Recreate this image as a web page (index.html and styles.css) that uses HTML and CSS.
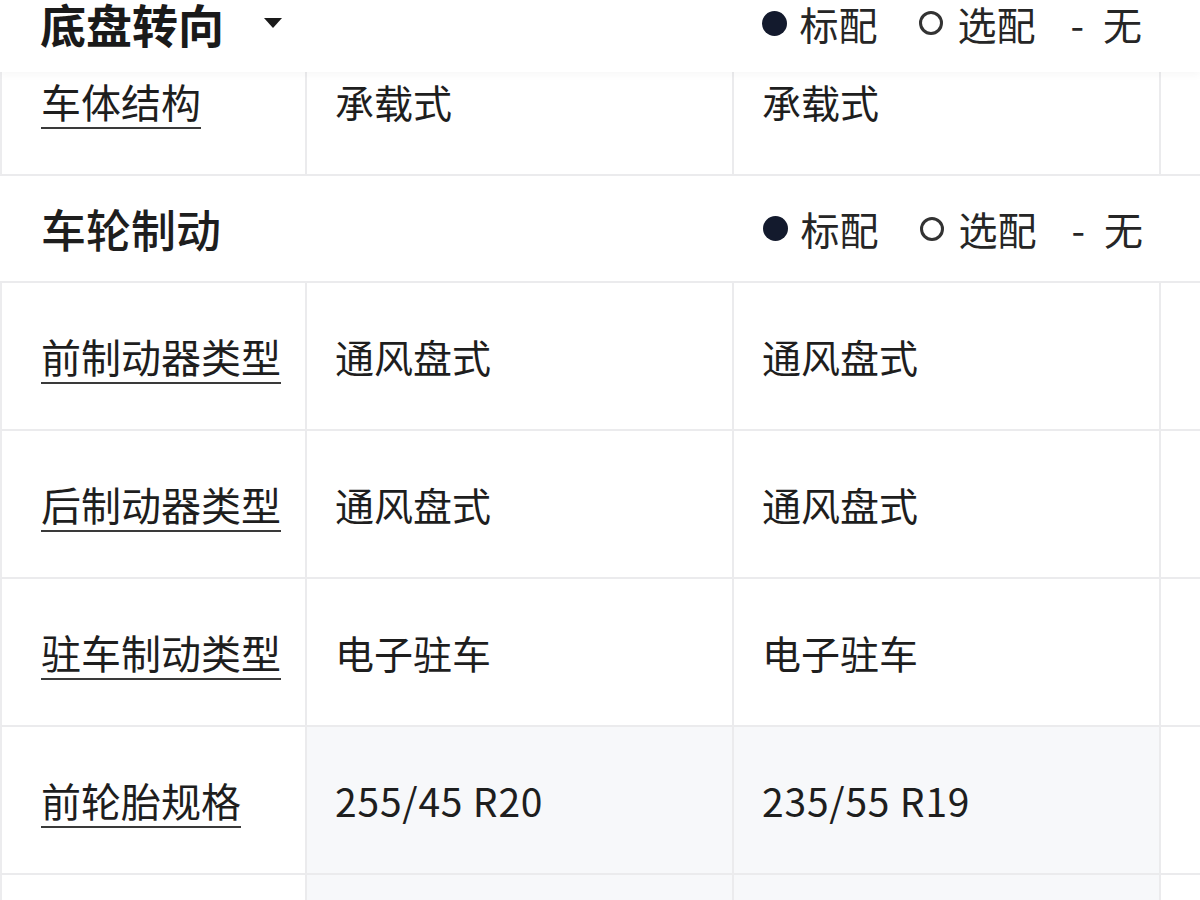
FILE: index.html
```html
<!DOCTYPE html>
<html lang="zh-CN">
<head>
<meta charset="utf-8">
<title>参数配置</title>
<link rel="stylesheet" href="styles.css">
</head>
<body>
<div class="page">
  <header class="sticky-head">
    <div class="head-title">底盘转向 <span class="caret"></span></div>
    <div class="legend">
      <span class="lg-item"><span class="dot"></span>标配</span>
      <span class="lg-item opt"><span class="ring"></span>选配</span>
      <span class="lg-item none"><span class="dash">-</span>无</span>
    </div>
  </header>

  <div class="spec">
    <div class="row">
      <div class="cell label"><span class="lbl">车体结构</span></div>
      <div class="cell val">承载式</div>
      <div class="cell val">承载式</div>
      <div class="cell val last"></div>
    </div>

    <div class="section">
      <div class="sec-title">车轮制动</div>
      <div class="legend">
        <span class="lg-item"><span class="dot"></span>标配</span>
        <span class="lg-item opt"><span class="ring"></span>选配</span>
        <span class="lg-item none"><span class="dash">-</span>无</span>
      </div>
    </div>

    <div class="row">
      <div class="cell label"><span class="lbl">前制动器类型</span></div>
      <div class="cell val">通风盘式</div>
      <div class="cell val">通风盘式</div>
      <div class="cell val last"></div>
    </div>
    <div class="row">
      <div class="cell label"><span class="lbl">后制动器类型</span></div>
      <div class="cell val">通风盘式</div>
      <div class="cell val">通风盘式</div>
      <div class="cell val last"></div>
    </div>
    <div class="row">
      <div class="cell label"><span class="lbl">驻车制动类型</span></div>
      <div class="cell val">电子驻车</div>
      <div class="cell val">电子驻车</div>
      <div class="cell val last"></div>
    </div>
    <div class="row diff">
      <div class="cell label"><span class="lbl">前轮胎规格</span></div>
      <div class="cell val num">255/45 R20</div>
      <div class="cell val num">235/55 R19</div>
      <div class="cell val last"></div>
    </div>
    <div class="row diff">
      <div class="cell label"></div>
      <div class="cell val"></div>
      <div class="cell val"></div>
      <div class="cell val last"></div>
    </div>
  </div>
</div>
</body>
</html>
```

FILE: styles.css
```css
* { box-sizing: border-box; }
html, body {
  margin: 0;
  padding: 0;
  background: #ffffff;
}
body {
  font-family: "Noto Sans CJK SC", "Noto Sans", sans-serif;
  color: #1e1e1e;
  overflow: hidden;
}
.page {
  position: relative;
  width: 1200px;
  height: 900px;
  overflow: hidden;
}
.sticky-head {
  position: absolute;
  top: 0;
  left: 0;
  right: 0;
  height: 72px;
  background: #ffffff;
  z-index: 2;
  display: flex;
  align-items: center;
  justify-content: space-between;
  padding: 0 58px 26px 40px;
  box-shadow: 0 3px 8px rgba(0, 0, 0, 0.035);
}
.head-title {
  font-size: 46px;
  font-weight: 700;
  color: #1a1a1a;
  display: flex;
  align-items: center;
  line-height: 1;
}
.caret {
  display: inline-block;
  width: 0;
  height: 0;
  margin-left: 40px;
  border-left: 9px solid transparent;
  border-right: 9px solid transparent;
  border-top: 10px solid #1a1a1a;
}
.legend {
  display: flex;
  align-items: center;
  font-size: 39px;
  line-height: 1;
  color: #262626;
}
.lg-item {
  display: flex;
  align-items: center;
}
.lg-item.opt { margin-left: 42px; }
.lg-item.none { margin-left: 35px; }
.dot {
  width: 25px;
  height: 25px;
  border-radius: 50%;
  background: #131a2d;
  margin-right: 12px;
}
.ring {
  width: 24px;
  height: 24px;
  border-radius: 50%;
  border: 3px solid #333;
  margin-right: 14px;
}
.dash {
  margin-right: 19px;
}
.spec {
  margin-top: 28px;
}
.row {
  display: grid;
  grid-template-columns: 305px 427px 427px 1fr;
  height: 148px;
  border-left: 2px solid #ececee;
  border-bottom: 2px solid #ebebed;
}
.cell {
  display: flex;
  align-items: center;
  border-right: 2px solid #ebebed;
  font-size: 39px;
  line-height: 1;
  color: #1e1e1e;
}
.cell.last { border-right: none; }
.label {
  padding-left: 39px;
  font-size: 40px;
}
.lbl {
  text-decoration: underline;
  text-decoration-thickness: 2px;
  text-underline-offset: 9px;
  text-decoration-color: #3a3a3a;
}
.val {
  padding-left: 28px;
}
.val.num {
  letter-spacing: 0.8px;
}
.row.diff .val {
  background: #f7f8fa;
}
.row.diff .val.last {
  background: #ffffff;
}
.section {
  height: 107px;
  display: flex;
  align-items: center;
  justify-content: space-between;
  padding: 0 57px 0 41px;
  border-bottom: 2px solid #ebebed;
}
.sec-title {
  font-size: 45px;
  font-weight: 500;
  line-height: 1;
  color: #1e1e1e;
}
```
